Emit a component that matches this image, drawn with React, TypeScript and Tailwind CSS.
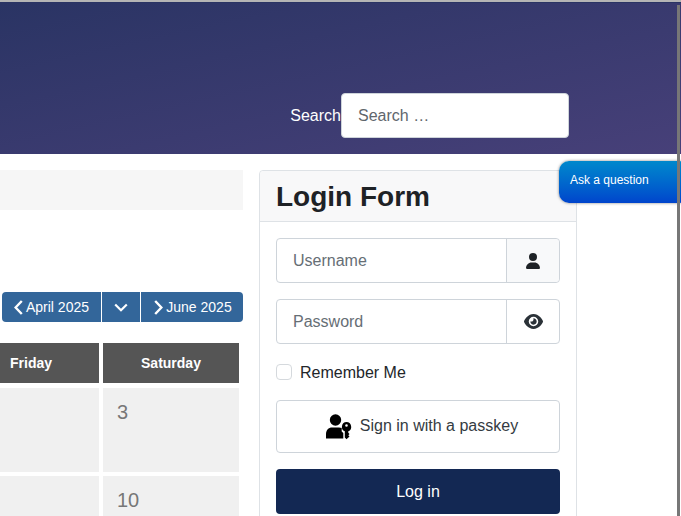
import { FaEye, FaUser } from "react-icons/fa6";

function PasskeyIcon() {
  return (
    <svg width="26" height="26" viewBox="0 0 26 26" fill="currentColor" className="text-black">
      <circle cx="9.5" cy="6" r="5.7" />
      <path d="M0 24.5v-4.2C0 16 2.6 13.5 6 13.5h7c1 0 1.9.2 2.7.6v3.4l1.6 1.6v5.4H0z" />
      <path
        fillRule="evenodd"
        d="M20.5 8a4.8 4.8 0 0 1 1.8 9.2v1.5l1.2 1.3-1.2 1.2 1.2 1.2-3 2.8-1.7-1.7v-6.3A4.8 4.8 0 0 1 20.5 8zm0 2.2a1.3 1.3 0 1 0 0 2.6 1.3 1.3 0 0 0 0-2.6z"
      />
    </svg>
  );
}

function ChevronLeft() {
  return (
    <svg width="9" height="15" viewBox="0 0 9 15" fill="none" stroke="currentColor" strokeWidth="2.4">
      <path d="M7.8 1 1.6 7.5l6.2 6.5" />
    </svg>
  );
}

function ChevronRight() {
  return (
    <svg width="9" height="15" viewBox="0 0 9 15" fill="none" stroke="currentColor" strokeWidth="2.4">
      <path d="M1.2 1l6.2 6.5L1.2 14" />
    </svg>
  );
}

function ChevronDown() {
  return (
    <svg width="14" height="9" viewBox="0 0 14 9" fill="none" stroke="currentColor" strokeWidth="2.2">
      <path d="M1.2 1.5 7 7.2l5.8-5.7" />
    </svg>
  );
}

const inputBox = "flex h-[45px] border border-[#ced4da] rounded";

export default function App() {
  return (
    <div className="relative w-[681px] h-[516px] overflow-hidden bg-white font-['Liberation_Sans',Arial,sans-serif] text-base text-[#22262a]">
      <div className="h-[3px] border-t-2 border-[#b5b5b5] bg-[#2a3464]" />
      <header className="h-[151px] bg-gradient-to-br from-[#2a3464] to-[#474079] flex items-end justify-end pb-4 pr-[112px]">
        <div className="flex items-center">
          <span className="text-white">Search</span>
          <div className="w-[228px] h-[45px] bg-white border border-[#ced4da] rounded pl-4 flex items-center text-[#5f666d]">
            Search …
          </div>
        </div>
      </header>

      <main className="flex gap-4 pt-4">
        <section className="w-[243px] shrink-0">
          <div className="h-10 bg-[#f6f6f6]" />
          <div className="flex justify-end mt-[82px] pl-0.5 h-[30px] gap-px text-sm text-white">
            <button className="flex-1 flex items-center justify-center gap-[3px] bg-[#33669a] rounded-l">
              <ChevronLeft />
              April 2025
            </button>
            <button className="w-[38px] flex items-center justify-center bg-[#33669a]">
              <ChevronDown />
            </button>
            <button className="w-[102px] pl-0.5 flex items-center justify-center gap-[3px] bg-[#33669a] rounded-r">
              <ChevronRight />
              June 2025
            </button>
          </div>

          <div className="grid grid-cols-[99px_136px] gap-x-1 mt-[21px]">
            <div className="h-10 bg-[#555555] text-white text-sm font-bold flex items-center pl-2.5">Friday</div>
            <div className="h-10 bg-[#555555] text-white text-sm font-bold flex items-center justify-center">Saturday</div>
            <div className="h-[84px] mt-[5px] bg-[#f0f0f0]" />
            <div className="h-[84px] mt-[5px] bg-[#f0f0f0] pl-3.5 pt-2.5 text-xl text-[#777777]">3</div>
            <div className="h-[60px] mt-1 bg-[#f0f0f0]" />
            <div className="h-[60px] mt-1 bg-[#f0f0f0] pl-3.5 pt-2.5 text-xl text-[#777777]">10</div>
          </div>
        </section>

        <section className="w-[318px] shrink-0 h-[400px] border border-[#dee2e6] rounded-t">
          <h2 className="h-[51px] bg-[#f8f8f9] border-b border-[#dee2e6] rounded-t px-4 pt-0.5 flex items-center text-[28px] font-bold text-[#1e2226]">
            Login Form
          </h2>
          <div className="px-4 pt-4">
            <div className={inputBox}>
              <div className="flex-1 flex items-center pl-4 text-[#666e75]">Username</div>
              <div className="w-[53px] flex items-center justify-center bg-[#f8f9fa] border-l border-[#ced4da] rounded-r">
                <FaUser size={16} className="text-[#1e2226]" />
              </div>
            </div>
            <div className={`${inputBox} mt-4`}>
              <div className="flex-1 flex items-center pl-4 text-[#666e75]">Password</div>
              <div className="w-[53px] flex items-center justify-center border-l border-[#ced4da]">
                <FaEye size={19} className="text-[#2b3238]" />
              </div>
            </div>
            <label className="flex items-center gap-2 mt-5 h-4">
              <span className="w-4 h-4 border border-[#d5d9dd] rounded" />
              <span className="pt-0.5">Remember Me</span>
            </label>
            <button className="w-full h-[53px] mt-5 pl-2 border border-[#ced4da] rounded flex items-center justify-center gap-2 text-[#343b42]">
              <PasskeyIcon />
              <span className="pb-0.5">Sign in with a passkey</span>
            </button>
            <button className="w-full h-[45px] mt-4 bg-[#132853] text-white rounded">Log in</button>
          </div>
        </section>
      </main>

      {/* floating widgets */}
      <div className="absolute left-[559px] top-[161px] w-[130px] h-[42px] rounded-[10px] bg-gradient-to-b from-[#0088cc] to-[#0044cc] shadow-[0_0_3px_rgba(0,0,0,0.5)] pl-[11px] pb-1 flex items-center text-xs text-white">
        Ask a question
      </div>
      <div className="absolute left-[677px] top-[5px] bottom-0 w-[3px] bg-[#777777]" />
    </div>
  );
}
